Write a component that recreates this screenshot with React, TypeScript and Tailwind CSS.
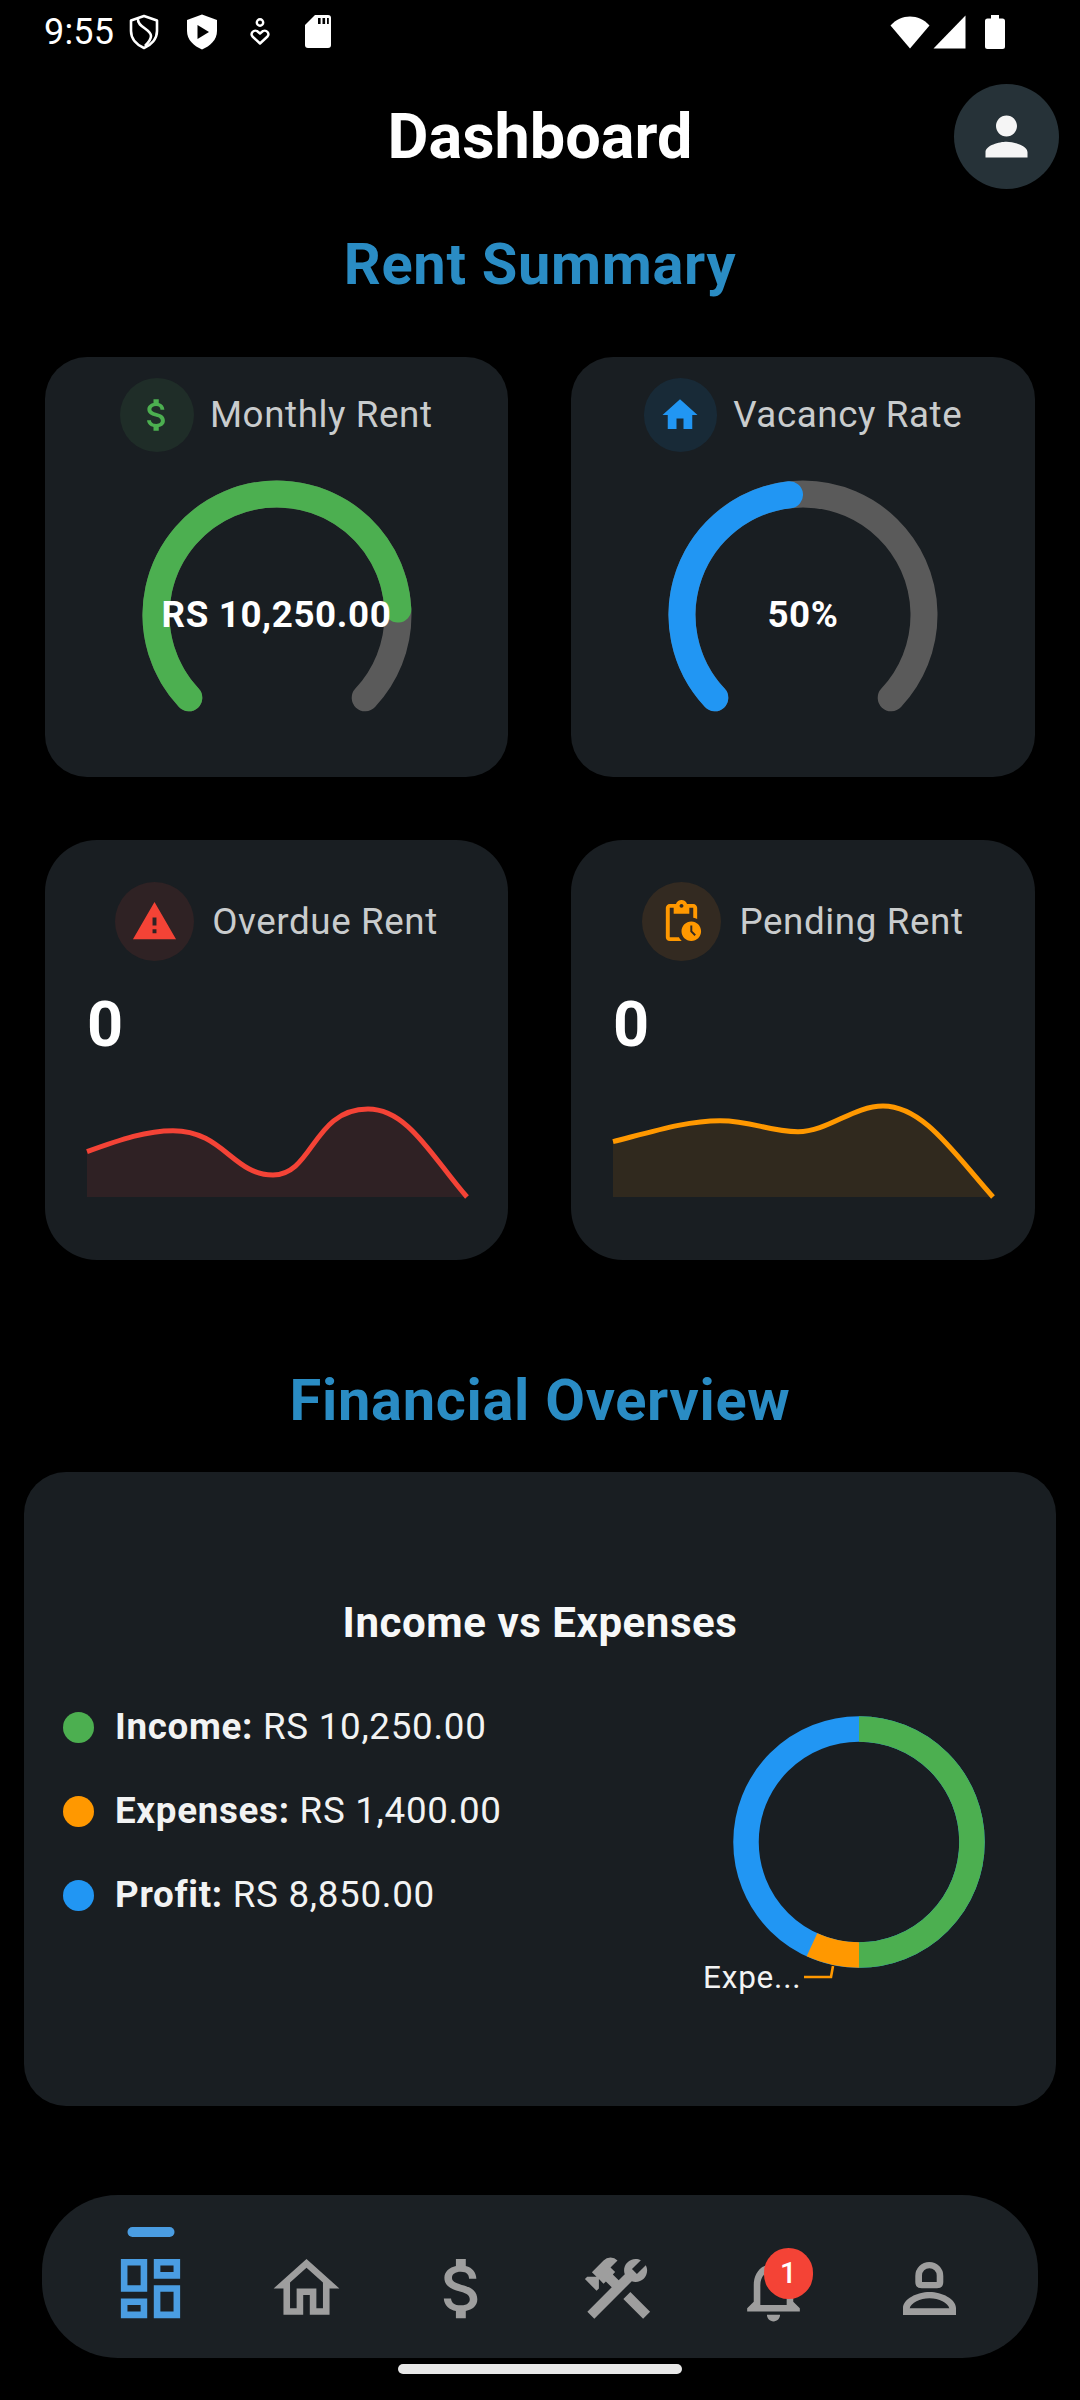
import React from "react";
import {
  MdAttachMoney,
  MdConstruction,
  MdHome,
  MdOutlineDashboard,
  MdOutlineHome,
  MdOutlineNotifications,
  MdPerson,
  MdOutlinePendingActions,
  MdWarning,
} from "react-icons/md";

function polar(r: number, deg: number, c: number) {
  const a = (deg * Math.PI) / 180;
  return [c + r * Math.cos(a), c + r * Math.sin(a)];
}

function arc(r: number, from: number, to: number, c: number) {
  const [x1, y1] = polar(r, from, c);
  const [x2, y2] = polar(r, to, c);
  const large = to - from > 180 ? 1 : 0;
  return `M${x1} ${y1} A${r} ${r} 0 ${large} 1 ${x2} ${y2}`;
}

function Gauge({ color, end, label }: { color: string; end: number; label: string }) {
  return (
    <div className="relative mx-auto mt-[28px] h-[270px] w-[270px]">
      <svg width="270" height="270" viewBox="0 0 270 270" fill="none" className="overflow-visible">
        <path d={arc(121, 136.8, 403.2, 135)} stroke="#5a5a5a" strokeWidth="27" strokeLinecap="round" />
        <path d={arc(121, 136.8, end, 135)} stroke={color} strokeWidth="27" strokeLinecap="round" />
      </svg>
      <div className="absolute inset-0 flex items-center justify-center text-[36.75px] font-bold tracking-[0.6px] text-white">
        {label}
      </div>
    </div>
  );
}

function Spark({ color, line, area }: { color: string; line: string; area: string }) {
  return (
    <svg width="384" height="104" viewBox="0 0 384 104" fill="none" className="mt-[35px] block overflow-visible">
      <path d={area} fill={color} fillOpacity="0.1" />
      <path d={line} stroke={color} strokeWidth="5" />
    </svg>
  );
}

const redLine = "M0 54.7 C35 42 60 33.7 86 33.7 C136 33.7 146 78 186 78 C226 78 226 12 281 12 C321 12 345 60 380 100";
const orangeLine = "M0 44.7 C45 33 75 23.7 107 23.7 C140 23.7 155 34.7 185 34.7 C215 34.7 240 9 270 9 C310 9 340 55 380 100";

function Header({ bg, gap, size, icon, label }: { bg: string; gap: string; size: string; icon: React.ReactNode; label: string }) {
  return (
    <div className={`flex items-center justify-center ${gap}`}>
      <div className={`flex items-center justify-center rounded-full ${bg} ${size}`}>{icon}</div>
      <span className="text-[36.75px] leading-[44px] tracking-[0.6px] text-[#c9cccd]">{label}</span>
    </div>
  );
}

function LegendRow({ color, name, value }: { color: string; name: string; value: string }) {
  return (
    <div className="flex h-[84px] items-center gap-[21px]">
      <span className={`h-[31px] w-[31px] rounded-full ${color}`} />
      <span className="text-[36.75px] tracking-[0.7px] text-[#f2f3f3]">
        <span className="font-bold">{name}</span> {value}
      </span>
    </div>
  );
}

function NavIcon({ children, active }: { children: React.ReactNode; active?: boolean }) {
  return (
    <div className={`relative flex h-full items-center justify-center pt-[23px] ${active ? "text-[#4a9de2]" : "text-[#9e9e9e]"}`}>
      {active && <span className="absolute left-1/2 top-[32px] h-[10px] w-[47px] -translate-x-1/2 rounded-full bg-[#4a9de2]" />}
      {children}
    </div>
  );
}

function PersonOutline() {
  return (
    <svg width="79" height="79" viewBox="-13 -13 79 79" fill="currentColor">
      <path
        fillRule="evenodd"
        d="M12.3 14 A14 14 0 0 1 40.3 14 V20 Q40.3 26.3 34 26.3 H18.6 Q12.3 26.3 12.3 20 Z M19 20 H33.7 V13.5 A7.35 7.35 0 0 0 19 13.5 Z"
      />
      <path
        fillRule="evenodd"
        d="M0 53 V46 C0 37 14 30 26.5 30 C39 30 53 37 53 46 V53 Z M6.7 46.3 H46.3 C45 41 36 36.3 26.5 36.3 C17 36.3 8 41 6.7 46.3 Z"
      />
    </svg>
  );
}

export default function App() {
  return (
    <div className="flex h-[2400px] w-[1080px] flex-col overflow-hidden bg-black font-[Roboto,sans-serif] text-white">
      {/* Status bar */}
      <div className="flex h-[63px] shrink-0 items-center justify-between pl-[44px] pr-[75px]">
        <div className="flex items-center">
          <span className="text-[36px] leading-[40px] tracking-[0.2px]">9:55</span>
          <svg width="30" height="36" viewBox="0 0 30 36" fill="none" className="ml-[15px]">
            <path d="M15 2 L28 6.5 V17 C28 25 22 31 15 34 C8 31 2 25 2 17 V6.5 Z" stroke="white" strokeWidth="2.6" strokeLinejoin="round" />
            <path d="M9 5 C8 13 22 15 22 22 C22 26 19 29 16 32" stroke="white" strokeWidth="2.6" />
          </svg>
          <svg width="30" height="36" viewBox="0 0 30 36" className="ml-[28px]">
            <path d="M15 0.5 L30 6 V17 C30 26 23 32 15 35.5 C7 32 0 26 0 17 V6 Z" fill="white" />
            <path d="M10.5 11 L22 18 L10.5 25 Z" fill="black" />
          </svg>
          <svg width="20" height="28" viewBox="0 0 20 28" fill="none" className="ml-[33px]">
            <circle cx="10" cy="4.5" r="3.2" stroke="white" strokeWidth="2.4" />
            <path d="M10 25.5 L2.5 18.5 C0 15.5 3.5 11.5 7 13 L10 15.5 L13 13 C16.5 11.5 20 15.5 17.5 18.5 Z" stroke="white" strokeWidth="2.4" strokeLinejoin="round" />
          </svg>
          <svg width="26" height="33" viewBox="0 0 26 33" className="ml-[35px]">
            <path d="M10 0 H23 A3 3 0 0 1 26 3 V30 A3 3 0 0 1 23 33 H3 A3 3 0 0 1 0 30 V10 Z" fill="white" />
            <rect x="13" y="3" width="2.6" height="6" fill="black" />
            <rect x="17.5" y="3" width="2.6" height="6" fill="black" />
            <rect x="22" y="3" width="1.8" height="6" fill="black" />
          </svg>
        </div>
        <div className="flex items-center">
          <svg width="40" height="34" viewBox="0 0 40 34">
            <path d="M20 33.5 L0.5 10.5 C11 -1.5 29 -1.5 39.5 10.5 Z" fill="white" />
          </svg>
          <svg width="33" height="34" viewBox="0 0 33 34" className="ml-[3px]">
            <path d="M32.5 0.5 V33.5 H0.5 Z" fill="white" />
          </svg>
          <svg width="20" height="34" viewBox="0 0 20 34" className="ml-[19px]">
            <path d="M6 0 H14 V3.5 H17.5 A2.5 2.5 0 0 1 20 6 V31.5 A2.5 2.5 0 0 1 17.5 34 H2.5 A2.5 2.5 0 0 1 0 31.5 V6 A2.5 2.5 0 0 1 2.5 3.5 H6 Z" fill="white" />
          </svg>
        </div>
      </div>

      {/* App bar */}
      <div className="mt-[21px] grid h-[105px] shrink-0 grid-cols-[105px_1fr_105px] items-center px-[21.5px]">
        <div />
        <h1 className="text-center text-[63px] font-bold leading-[74px]">Dashboard</h1>
        <div className="flex h-[105px] w-[105px] items-center justify-center rounded-full bg-[#263238]">
          <MdPerson size={63} color="#f5f5f5" />
        </div>
      </div>

      <h2 className="mt-[42px] text-center text-[57.75px] font-bold leading-[66px] tracking-[0.7px] text-[#2a8cc4]">Rent Summary</h2>

      {/* Stat cards */}
      <div className="mt-[60px] grid shrink-0 grid-cols-[463px_464px] gap-[63px] pl-[45px]">
        <div className="h-[420px] rounded-[42px] bg-[#191e22] pt-[21px]">
          <Header
            bg="bg-[#1f2d28]"
            gap="gap-[16px]"
            size="h-[73.5px] w-[73.5px]"
            icon={<MdAttachMoney size={42} color="#4caf50" />}
            label="Monthly Rent"
          />
          <Gauge color="#4caf50" end={357.2} label="RS 10,250.00" />
        </div>
        <div className="h-[420px] rounded-[42px] bg-[#191e22] pt-[21px]">
          <Header
            bg="bg-[#182a37]"
            gap="gap-[16px]"
            size="h-[73.5px] w-[73.5px]"
            icon={<MdHome size={42} color="#2196f3" />}
            label="Vacancy Rate"
          />
          <Gauge color="#2196f3" end={263.6} label="50%" />
        </div>
        <div className="h-[420px] rounded-[52px] bg-[#191e22] pl-[42px] pr-[42px] pt-[42px]">
          <Header
            bg="bg-[#2f2224]"
            gap="gap-[18px]"
            size="h-[79px] w-[79px]"
            icon={<MdWarning size={47} color="#f44336" />}
            label="Overdue Rent"
          />
          <div className="mt-[27px] text-[63px] font-bold leading-[74px]">0</div>
          <Spark color="#f44336" line={redLine} area={`${redLine} L0 100 Z`} />
        </div>
        <div className="h-[420px] rounded-[52px] bg-[#191e22] pl-[42px] pr-[42px] pt-[42px]">
          <Header
            bg="bg-[#332a21]"
            gap="gap-[18px]"
            size="h-[79px] w-[79px]"
            icon={<MdOutlinePendingActions size={47} color="#ff9800" />}
            label="Pending Rent"
          />
          <div className="mt-[27px] text-[63px] font-bold leading-[74px]">0</div>
          <Spark color="#ff9800" line={orangeLine} area={`${orangeLine} L0 100 Z`} />
        </div>
      </div>

      <h2 className="mt-[107px] text-center text-[57.75px] font-bold leading-[66px] tracking-[0.7px] text-[#2a8cc4]">Financial Overview</h2>

      {/* Income vs expenses */}
      <div className="mx-[24px] mt-[39px] h-[634px] shrink-0 rounded-[42px] bg-[#191e22] pt-[126px]">
        <h3 className="text-center text-[42px] font-bold leading-[50px] tracking-[0.55px] text-[#f7f8f8]">Income vs Expenses</h3>
        <div className="mt-[37px] flex justify-between pl-[39px] pr-[16px]">
          <div>
            <LegendRow color="bg-[#4caf50]" name="Income:" value="RS 10,250.00" />
            <LegendRow color="bg-[#ff9800]" name="Expenses:" value="RS 1,400.00" />
            <LegendRow color="bg-[#2196f3]" name="Profit:" value="RS 8,850.00" />
          </div>
          <svg width="340" height="320" viewBox="0 0 340 320" fill="none" className="overflow-visible">
            <circle cx="159" cy="157" r="113" stroke="#2196f3" strokeWidth="25.5" />
            <path d="M159 44 A113 113 0 0 1 159 270" stroke="#4caf50" strokeWidth="25.5" />
            <path d={`M159 270 A113 113 0 0 1 ${159 - 113 * Math.sin((24.6 * Math.PI) / 180)} ${157 + 113 * Math.cos((24.6 * Math.PI) / 180)}`} stroke="#ff9800" strokeWidth="25.5" />
            <path d="M133 281 L131 292 H104" stroke="#ff9800" strokeWidth="2.6" />
            <text x="3" y="303" fill="#f2f3f3" fontSize="31.5" letterSpacing="0.8">Expe...</text>
          </svg>
        </div>
      </div>

      {/* Bottom navigation */}
      <nav className="relative mx-[42px] mt-[89px] grid h-[163px] shrink-0 grid-cols-6 rounded-[76px] bg-[#1b2024] px-[31px]">
        <NavIcon active><MdOutlineDashboard size={79} /></NavIcon>
        <NavIcon><MdOutlineHome size={79} /></NavIcon>
        <NavIcon><MdAttachMoney size={79} /></NavIcon>
        <NavIcon><MdConstruction size={79} /></NavIcon>
        <NavIcon>
          <MdOutlineNotifications size={79} />
          <span className="absolute left-[68px] top-[53px] flex h-[51px] w-[49px] items-center justify-center rounded-full bg-[#f44336] text-[29px] font-medium leading-none text-white">1</span>
        </NavIcon>
        <NavIcon><PersonOutline /></NavIcon>
      </nav>
      <div className="mx-auto mt-[6px] h-[10px] w-[284px] shrink-0 rounded-full bg-[#e8e8e8]" />
    </div>
  );
}
